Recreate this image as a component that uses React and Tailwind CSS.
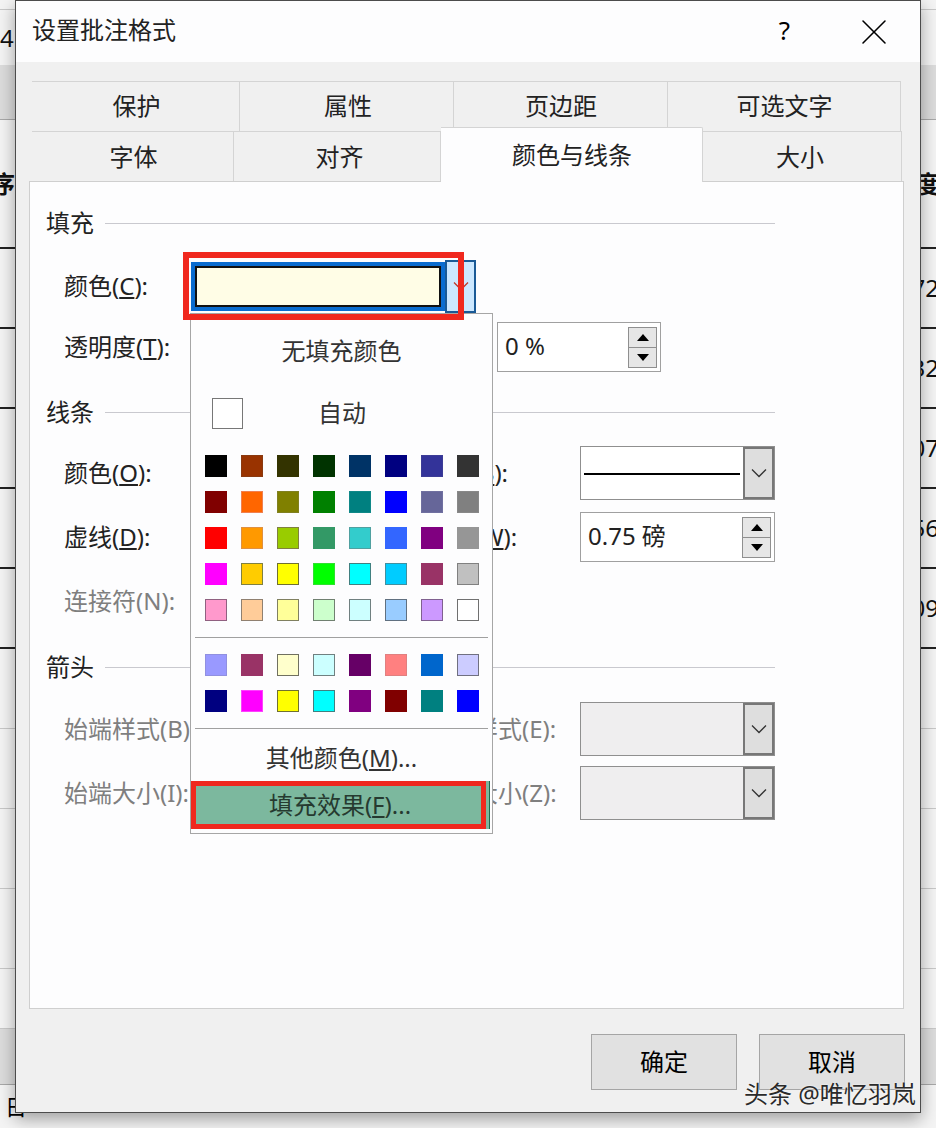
import { X } from 'lucide-react';

const FONT = "[font-family:'Noto_Sans','Noto_Sans_CJK_SC',sans-serif]";

const SHEET_ROWS = [
  { h: 'h-[10px]', cls: 'border-b border-[#c8c8c8]' },
  { h: 'h-[55px]', cls: '', left: '4', leftCls: 'ml-0' },
  { h: 'h-[55px]', cls: 'bg-[#dcdcdc] border-b border-[#a8a8a8]' },
  { h: 'h-[129px]', cls: 'border-b-2 border-[#222]', left: '序', right: '度', bold: true, leftCls: '-ml-[9px]' },
  { h: 'h-[80px]', cls: 'border-b-2 border-[#222]', right: '72' },
  { h: 'h-[80px]', cls: 'border-b-2 border-[#222]', right: '32' },
  { h: 'h-[80px]', cls: 'border-b-2 border-[#222]', right: '07' },
  { h: 'h-[80px]', cls: 'border-b-2 border-[#222]', right: '56' },
  { h: 'h-[80px]', cls: 'border-b-2 border-[#222]', right: '09' },
  { h: 'h-[80px]', cls: 'border-b border-[#c8c8c8]' },
  { h: 'h-[80px]', cls: 'border-b border-[#c8c8c8]' },
  { h: 'h-[80px]', cls: 'border-b border-[#c8c8c8]' },
  { h: 'h-[80px]', cls: 'border-b border-[#c8c8c8]' },
  { h: 'h-[60px]', cls: 'border-b border-[#c8c8c8]' },
  { h: 'h-[56px]', cls: 'bg-[#dcdcdc] border-b border-[#a8a8a8]' },
];

const PALETTE_TOP = [
  'bg-[#000000] border-[#000000]', 'bg-[#993300] border-[#8a3a10]', 'bg-[#333300] border-[#333300]', 'bg-[#003300] border-[#003300]', 'bg-[#003366] border-[#003366]', 'bg-[#000080] border-[#000080]', 'bg-[#333399] border-[#3c3c96]', 'bg-[#333333] border-[#333333]',
  'bg-[#800000] border-[#800000]', 'bg-[#ff6600] border-[#f08050]', 'bg-[#808000] border-[#808020]', 'bg-[#008000] border-[#008000]', 'bg-[#008080] border-[#108888]', 'bg-[#0000ff] border-[#0000ff]', 'bg-[#666699] border-[#7070a0]', 'bg-[#808080] border-[#888888]',
  'bg-[#ff0000] border-[#ff0000]', 'bg-[#ff9900] border-[#e09040]', 'bg-[#99cc00] border-[#808040]', 'bg-[#339966] border-[#339966]', 'bg-[#33cccc] border-[#50a0a0]', 'bg-[#3366ff] border-[#3366ff]', 'bg-[#800080] border-[#800080]', 'bg-[#969696] border-[#969696]',
  'bg-[#ff00ff] border-[#ff00ff]', 'bg-[#ffcc00] border-[#808040]', 'bg-[#ffff00] border-[#707030]', 'bg-[#00ff00] border-[#30e030]', 'bg-[#00ffff] border-[#408080]', 'bg-[#00ccff] border-[#4090a0]', 'bg-[#993366] border-[#993366]', 'bg-[#c0c0c0] border-[#808080]',
  'bg-[#ff99cc] border-[#906080]', 'bg-[#ffcc99] border-[#908070]', 'bg-[#ffff99] border-[#808060]', 'bg-[#ccffcc] border-[#708070]', 'bg-[#ccffff] border-[#708080]', 'bg-[#99ccff] border-[#607080]', 'bg-[#cc99ff] border-[#806090]', 'bg-[#ffffff] border-[#707070]',
];

const PALETTE_BOTTOM = [
  'bg-[#9999ff] border-[#9090e0]', 'bg-[#993366] border-[#993366]', 'bg-[#ffffcc] border-[#707060]', 'bg-[#ccffff] border-[#708080]', 'bg-[#660066] border-[#660066]', 'bg-[#ff8080] border-[#e08080]', 'bg-[#0066cc] border-[#0066cc]', 'bg-[#ccccff] border-[#707080]',
  'bg-[#000080] border-[#000080]', 'bg-[#ff00ff] border-[#ff40ff]', 'bg-[#ffff00] border-[#707030]', 'bg-[#00ffff] border-[#408080]', 'bg-[#800080] border-[#800080]', 'bg-[#800000] border-[#800000]', 'bg-[#008080] border-[#008080]', 'bg-[#0000ff] border-[#0000ff]',
];

function Chevron({ color = '#333' }) {
  return (
    <svg width="16" height="10" viewBox="0 0 16 10" fill="none">
      <path d="M1 1.5 L8 8.5 L15 1.5" stroke={color} strokeWidth="1.3" />
    </svg>
  );
}

function Triangle({ down }) {
  return (
    <svg width="12" height="7" viewBox="0 0 12 7">
      <path d={down ? 'M0 0 H12 L6 7 Z' : 'M6 0 L12 7 H0 Z'} fill="#000" />
    </svg>
  );
}

function Section({ title, className = '' }) {
  return (
    <div className={`flex items-center gap-[11px] h-[36px] w-[729px] text-[#222] ${className}`}>
      <span>{title}</span>
      <div className="flex-1 h-px bg-[#c9c9cf]" />
    </div>
  );
}

function Row({ className = '', children }) {
  return <div className={`flex items-center h-[50px] pl-[18px] whitespace-nowrap ${className}`}>{children}</div>;
}

function Spin({ value, className = '' }) {
  return (
    <div className={`flex items-center justify-between h-[50px] pl-[7px] pr-[3px] border border-[#a0a0a0] bg-white text-[#222] ${className}`}>
      <span className="pb-[3px]">{value}</span>
      <div className="flex flex-col w-[29px]">
        <div className="h-[21px] flex items-center justify-center bg-[#e6e6e6] border border-[#8f8f8f]">
          <Triangle />
        </div>
        <div className="h-[21px] -mt-px flex items-center justify-center bg-[#e6e6e6] border border-[#8f8f8f]">
          <Triangle down />
        </div>
      </div>
    </div>
  );
}

function Combo({ disabled, children }) {
  return (
    <div className={`flex h-[54px] w-[195px] border border-[#8f8f8f] ${disabled ? 'bg-[#efeeef]' : 'bg-white'}`}>
      <div className="flex-1 flex items-center pl-[3px] pr-[3px]">{children}</div>
      <div className="w-[31px] flex items-center justify-center bg-[#dedede] border-2 border-[#777]">
        <Chevron />
      </div>
    </div>
  );
}

function Tab({ label, className = '' }) {
  return (
    <div className={`flex items-center justify-center h-[50px] bg-[#f0f0f0] border-t border-r border-[#d4d4d4] text-[#222] ${className}`}>
      {label}
    </div>
  );
}

function ColorMenu() {
  return (
    <div className="absolute left-[190px] top-[313px] w-[303px] h-[521px] bg-[#fdfdfe] border border-[#a6a6a6] text-[#333]">
      <div className="h-[75px] pb-[2px] flex items-center justify-center">无填充颜色</div>
      <div className="h-[48px] flex items-center pl-[21px]">
        <div className="w-[31px] h-[31px] border border-[#777] bg-white" />
        <span className="w-[198px] text-center">自动</span>
      </div>
      <div className="grid grid-cols-8 gap-[14px] w-[274px] ml-[14px] mt-[18px]">
        {PALETTE_TOP.map((c, i) => (
          <div key={i} className={`w-[22px] h-[22px] border ${c}`} />
        ))}
      </div>
      <div className="h-px bg-[#a0a0a0] mx-[4px] mt-[16px]" />
      <div className="grid grid-cols-8 gap-[14px] w-[274px] ml-[14px] mt-[16px]">
        {PALETTE_BOTTOM.map((c, i) => (
          <div key={i} className={`w-[22px] h-[22px] border ${c}`} />
        ))}
      </div>
      <div className="h-px bg-[#a0a0a0] mx-[4px] mt-[16px]" />
      <div className="h-[52px] pt-[6px] flex items-center justify-center">
        <span>其他颜色(<u>M</u>)...</span>
      </div>
      <div className="relative h-[48px] w-[299px] bg-[#7cb89e] border-r border-[#1f6b50] flex items-center justify-center text-[#263a30]">
        <span>填充效果(<u>F</u>)...</span>
        <div className="absolute inset-y-0 left-0 w-[295px] border-[5px] border-[#f0281e]" />
      </div>
    </div>
  );
}

export default function App() {
  return (
    <div className={`relative w-[936px] h-[1128px] overflow-hidden bg-[#f4f4f4] text-[24px] leading-none ${FONT}`}>
      {/* hoja de calculo detras del dialogo */}
      <div className="flex flex-col">
        {SHEET_ROWS.map((row, i) => (
          <div
            key={i}
            className={`flex items-center justify-between whitespace-nowrap text-[#111] ${row.h} ${row.cls} ${row.bold ? 'font-bold' : ''}`}
          >
            <span className={row.leftCls || ''}>{row.left || ''}</span>
            <span className="-mr-[3px]">{row.right || ''}</span>
          </div>
        ))}
        <div className="flex items-start pt-[10px] pl-[5px] text-[22px] text-black">日</div>
      </div>

      {/* dialogo */}
      <div className="absolute left-[15px] top-0 w-[906px] h-[1113px] flex flex-col bg-[#f0f0f0] border border-[#4c4c4c] shadow-[0_6px_16px_rgba(0,0,0,0.35)]">
        <div className="h-[61px] flex items-center bg-[#fdfdfe] pl-[16px] text-[#222]">
          <span className="flex-1 pb-[3px]">设置批注格式</span>
          <span className="mr-[62px] pb-[3px] text-[26px] text-black">?</span>
          <X size={44} strokeWidth={0.85} className="mr-[24px] text-black" />
        </div>

        <div className="flex flex-col pl-[16px] pt-[19px]">
          <div className="flex">
            <Tab label="保护" className="w-[208px] pl-[2px] pb-[2px]" />
            <Tab label="属性" className="w-[214px] pl-[3px] pb-[2px]" />
            <Tab label="页边距" className="w-[214px] pl-[1px] pb-[2px]" />
            <Tab label="可选文字" className="w-[233px] pl-[1px] pb-[2px]" />
          </div>
          <div className="flex items-end h-[50px]">
            <Tab label="字体" className="w-[202px] pl-[2px]" />
            <Tab label="对齐" className="w-[207px] pl-[5px]" />
            <div className="relative z-10 flex items-center justify-center w-[262px] h-[55px] -mb-px pb-[1px] pl-[1px] bg-[#fdfdfe] border-t border-r border-[#d4d4d4] rounded-tr-[2px] text-[#222]">
              颜色与线条
            </div>
            <Tab label="大小" className="w-[199px] pr-[4px]" />
          </div>
        </div>

        <div className="ml-[13px] w-[875px] h-[828px] flex flex-col pl-[16px] pt-[23px] bg-[#fdfdfe] border border-[#cfcfcf] text-[#222]">
          <Section title="填充" />
          <Row className="h-[56px] mt-[17px]">
            <span className="w-[127px]">颜色(<u>C</u>):</span>
            <div className="flex items-center h-[53px]">
              <div className="w-[254px] h-[49px] p-[4px] bg-[#0a6ccf]">
                <div className="w-full h-full bg-[#fffde6] border-[2px] border-[#111]" />
              </div>
              <div className="w-[31px] h-[53px] flex items-center justify-center bg-[#cce8ff] border-[2px] border-[#1a5a96]">
                <Chevron color="#c0392b" />
              </div>
            </div>
          </Row>
          <Row className="mt-[8px]">
            <span className="w-[433px]">透明度(<u>T</u>):</span>
            <Spin value="0 %" className="w-[164px]" />
          </Row>

          <Section title="线条" className="mt-[22px]" />
          <Row className="mt-[18px]">
            <span className="w-[362px]">颜色(<u>O</u>):</span>
            <span className="w-[154px]">线型(<u>S</u>):</span>
            <Combo>
              <div className="w-full h-[2px] mt-px bg-black" />
            </Combo>
          </Row>
          <Row className="mt-[14px]">
            <span className="w-[362px]">虚线(<u>D</u>):</span>
            <span className="w-[154px]">粗细(<u>W</u>):</span>
            <Spin value="0.75 磅" className="w-[195px]" />
          </Row>
          <Row className="mt-[14px] text-[#7f7f7f]">
            <span>连接符(N):</span>
          </Row>

          <Section title="箭头" className="mt-[23px]" />
          <Row className="mt-[19px] text-[#7f7f7f]">
            <span className="w-[362px]">始端样式(B):</span>
            <span className="w-[154px]">末端样式(E):</span>
            <Combo disabled />
          </Row>
          <Row className="mt-[14px] text-[#7f7f7f]">
            <span className="w-[362px]">始端大小(I):</span>
            <span className="w-[154px]">末端大小(Z):</span>
            <Combo disabled />
          </Row>
        </div>

        <div className="flex justify-end gap-[22px] mt-[25px] pr-[15px]">
          <button className="w-[146px] h-[56px] bg-[#e1e1e1] border border-[#a5a5a5] text-black">确定</button>
          <button className="w-[146px] h-[56px] bg-[#e1e1e1] border border-[#a5a5a5] text-black">取消</button>
        </div>
      </div>

      <ColorMenu />

      {/* marcas rojas */}
      <div className="absolute left-[183px] top-[252px] w-[281px] h-[68px] border-[6px] border-[#f0281e]" />

      <div className="absolute left-[744px] top-[1082px] text-[24px] text-[#2a2a2a] whitespace-nowrap [text-shadow:0_0_2px_#fff]">
        头条 @唯忆羽岚
      </div>
    </div>
  );
}
